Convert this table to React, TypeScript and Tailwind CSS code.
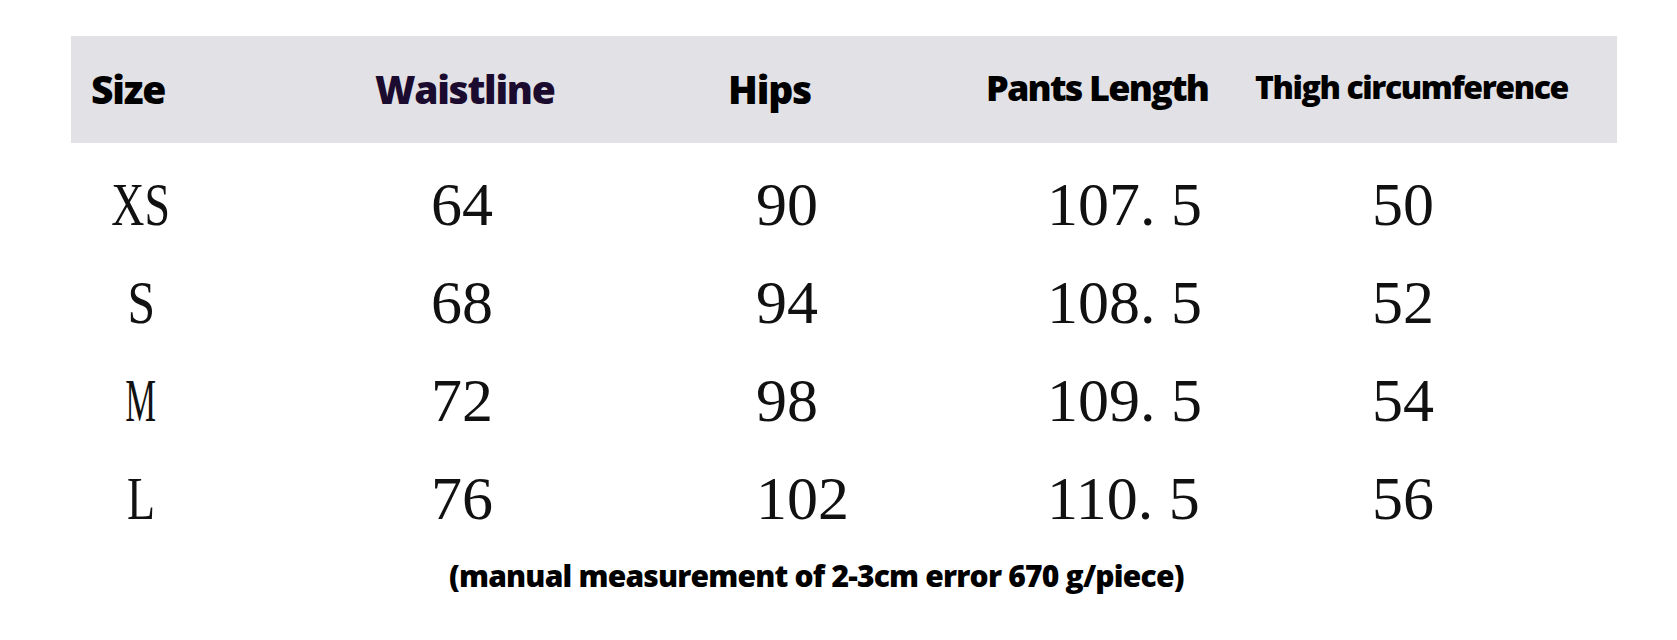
import React from "react";

const rows = [
  { size: "XS", sizeCls: "scale-x-[0.74]", w: "64", h: "90", p: "107. 5", t: "50" },
  { size: "S", sizeCls: "scale-x-[0.8]", w: "68", h: "94", p: "108. 5", t: "52" },
  { size: "M", sizeCls: "scale-x-[0.56]", w: "72", h: "98", p: "109. 5", t: "54" },
  { size: "L", sizeCls: "scale-x-[0.74]", w: "76", h: "102", p: "110. 5", t: "56" },
];

export default function App() {
  return (
    <div className="w-[1677px] h-[640px] bg-white overflow-hidden text-black">
      <div className="pt-[36px] pl-[71px]">
        <div
          className="w-[1546px] h-[107px] bg-[#e2e1e6] grid grid-cols-[284px_353px_258px_269px_1fr] pl-[20px] items-start font-extrabold"
          style={{ fontFamily: '"Open Sans", "Noto Sans", sans-serif' }}
        >
          <div className="pt-[33px] text-[39px] leading-none tracking-[-1.2px]">Size</div>
          <div className="pt-[33px] text-[39px] leading-none tracking-[-1.3px] text-[#1b0b2e]">Waistline</div>
          <div className="pt-[33px] text-[39px] leading-none tracking-[-1.2px]">Hips</div>
          <div className="pt-[34px] text-[36px] leading-none tracking-[-1.8px]">Pants Length</div>
          <div className="pt-[35px] text-[32px] leading-none tracking-[-1.4px]">Thigh circumference</div>
        </div>

        <div
          className="mt-[12px] grid grid-cols-[360px_325px_291px_325px_1fr] text-[62px] leading-[98px] text-[#111]"
          style={{ fontFamily: '"Liberation Serif", "Times New Roman", serif' }}
        >
          {rows.map((r) => (
            <React.Fragment key={r.size}>
              <div>
                <div className="w-[140px] text-center">
                  <span className={`inline-block ${r.sizeCls}`}>{r.size}</span>
                </div>
              </div>
              <div>{r.w}</div>
              <div>{r.h}</div>
              <div className="whitespace-pre">{r.p}</div>
              <div>{r.t}</div>
            </React.Fragment>
          ))}
        </div>
      </div>

      <div
        className="mt-[14px] pl-[449px] text-[30px] leading-none font-extrabold tracking-[-0.8px] whitespace-nowrap"
        style={{ fontFamily: '"Open Sans", "Noto Sans", sans-serif' }}
      >
        (manual measurement of 2-3cm error 670 g/piece)
      </div>
    </div>
  );
}
